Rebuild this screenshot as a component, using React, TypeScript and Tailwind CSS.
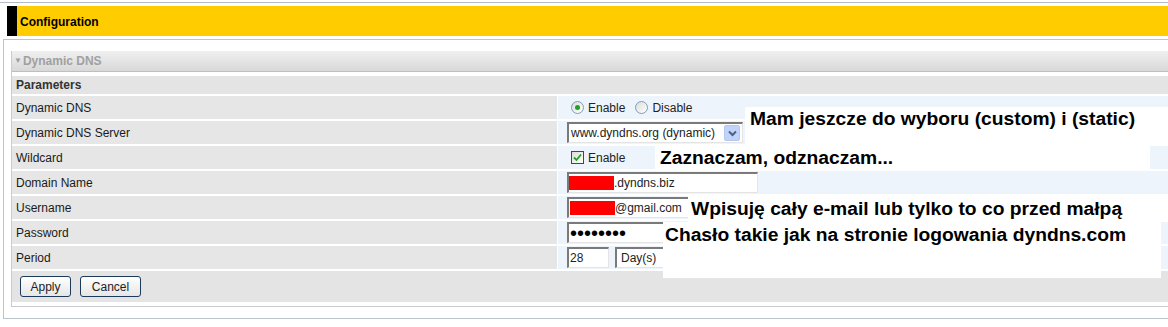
import React from "react";

const Radio = ({ checked }: { checked?: boolean }) => (
  <span className="relative inline-flex h-[13px] w-[13px] items-center justify-center rounded-full border border-[#7f9db9] bg-gradient-to-br from-[#dcdcd7] to-white">
    {checked && <span className="h-[5px] w-[5px] rounded-full bg-[#21a121]" />}
  </span>
);

const Checkbox = () => (
  <span className="inline-flex h-[13px] w-[13px] items-center justify-center border border-[#1c5180] bg-gradient-to-br from-[#dcdcd7] to-white">
    <svg width="9" height="9" viewBox="0 0 9 9">
      <path d="M1 4.5 L3.5 7 L8 1.5" stroke="#21a121" strokeWidth="1.8" fill="none" />
    </svg>
  </span>
);

const rowLabels = [
  "Dynamic DNS",
  "Dynamic DNS Server",
  "Wildcard",
  "Domain Name",
  "Username",
  "Password",
  "Period",
];

const inputCls =
  "h-[21px] bg-white border-t-2 border-l-2 border-t-[#7a7a7a] border-l-[#7a7a7a] border-b border-r border-b-[#e4e4e4] border-r-[#e4e4e4] flex items-center text-[12px] text-[#222]";

function RightCell({ i }: { i: number }) {
  switch (i) {
    case 0:
      return (
        <div className="flex items-center pl-[13px] gap-[4px] text-[12px] text-[#222]">
          <Radio checked />
          <span>Enable</span>
          <span className="ml-[2px]" />
          <Radio />
          <span>Disable</span>
        </div>
      );
    case 1:
      return (
        <div className="flex items-center pl-[9px] pt-[1px] self-start">
          <div className={`${inputCls} w-[176px] justify-between pl-[2px] pr-[2px]`}>
            <span>www.dyndns.org (dynamic)</span>
            <span className="flex h-[16px] w-[16px] items-center justify-center rounded-[2px] bg-[#c1d3fb] border border-[#b5c8f0]">
              <svg width="9" height="7" viewBox="0 0 9 7">
                <path d="M1 1.5 L4.5 5 L8 1.5" stroke="#4d6185" strokeWidth="2" fill="none" />
              </svg>
            </span>
          </div>
        </div>
      );
    case 2:
      return (
        <div className="flex items-center pl-[13px] gap-[4px] text-[12px] text-[#222]">
          <Checkbox />
          <span>Enable</span>
        </div>
      );
    case 3:
      return (
        <div className="flex items-center pl-[9px] pt-[1px] self-start">
          <div className={`${inputCls} w-[191px]`}>
            <span className="h-[14px] w-[45px] bg-[#ff0000]" />
            <span>.dyndns.biz</span>
          </div>
        </div>
      );
    case 4:
      return (
        <div className="flex items-center pl-[9px] pt-[1px] self-start">
          <div className={`${inputCls} w-[191px]`}>
            <span className="ml-px h-[14px] w-[45px] bg-[#ff0000]" />
            <span>@gmail.com</span>
          </div>
        </div>
      );
    case 5:
      return (
        <div className="flex items-center pl-[9px] pt-[1px] self-start">
          <div className={`${inputCls} w-[191px] pl-[1px] !text-[20px] leading-none text-black`}>
            <span>••••••••</span>
          </div>
        </div>
      );
    default:
      return (
        <div className="flex items-center pl-[9px] pt-[1px] self-start gap-[6px]">
          <div className={`${inputCls} w-[42px] pl-[1px]`}>
            <span>28</span>
          </div>
          <div className={`${inputCls} w-[80px] pl-[4px]`}>
            <span>Day(s)</span>
          </div>
        </div>
      );
  }
}

export default function App() {
  return (
    <div
      className="relative w-[1168px] h-[327px] overflow-hidden bg-white"
      style={{ fontFamily: '"Liberation Sans", Arial, sans-serif' }}
    >
      {/* top line */}
      <div className="mt-[2px] h-px bg-[#b4bcc8]" />
      {/* yellow bar */}
      <div className="ml-[7px] mt-[3px] flex h-[30px]">
        <div className="w-[10px] bg-black" />
        <div className="flex flex-1 items-center bg-[#ffcc00] pl-[3px] pt-[2px] text-[12px] font-bold text-black">
          Configuration
        </div>
      </div>
      {/* outer box */}
      <div className="ml-[3px] mt-[3px] h-[280px] border-l border-t border-b border-[#bcc4cc] pl-[7px] pt-[11px]">
        {/* inner panel */}
        <div className="h-[256px] border-l border-b border-[#c8ccd0]">
          <div className="flex h-[21px] items-center border-b border-[#b8c0cc] bg-gradient-to-b from-[#f0f0f0] to-[#d8d8d8] pl-[2px] text-[12px] font-bold text-[#a0a0a0]">
            <span className="text-[8px] mr-[1px]">▼</span>
            <span>Dynamic DNS</span>
          </div>
          <div className="mt-[4px] flex h-[18px] items-center bg-[#e4e4e4] pl-[4px] text-[12px] font-bold text-[#333]">
            Parameters
          </div>
          <div className="mt-[2px] flex flex-col gap-[2px]">
            {rowLabels.map((l, i) => (
              <div key={l} className="flex h-[23px] gap-px">
                <div className="flex w-[545px] items-center bg-[#e6e6e6] pl-[4px] text-[12px] text-[#1a1a1a]">
                  {l}
                </div>
                <div className="flex flex-1 bg-[#eef4fc]">
                  <RightCell i={i} />
                </div>
              </div>
            ))}
            <div className="flex h-[31px] items-center gap-[9px] bg-[#e4e4e4] pl-[8px]">
              <button className="h-[21px] w-[51px] rounded-[3px] border border-[#1c3a5a] bg-gradient-to-b from-white to-[#e6e6e6] text-[12px] text-[#222]">
                Apply
              </button>
              <button className="h-[21px] w-[61px] rounded-[3px] border border-[#1c3a5a] bg-gradient-to-b from-white to-[#e6e6e6] text-[12px] text-[#222]">
                Cancel
              </button>
            </div>
          </div>
        </div>
      </div>

      {/* pasted annotation boxes */}
      <div className="absolute left-[745px] top-[107px] h-[38px] w-[423px] bg-white pl-[5px] pt-[1px] text-[19.25px] leading-[22px] font-bold text-black">
        Mam jeszcze do wyboru (custom) i (static)
      </div>
      <div className="absolute left-[655px] top-[145px] flex h-[26px] w-[495px] items-center bg-white pl-[5px] text-[19.25px] leading-[22px] font-bold text-black">
        Zaznaczam, odznaczam...
      </div>
      <div className="absolute left-[688px] top-[196px] flex h-[26px] w-[480px] items-center bg-white pl-[3px] text-[19.25px] leading-[22px] font-bold text-black">
        Wpisuję cały e-mail lub tylko to co przed małpą
      </div>
      <div className="absolute left-[663px] top-[222px] h-[56px] w-[498px] bg-white pl-[2px] pt-[2px] text-[19.25px] leading-[22px] font-bold text-black">
        Chasło takie jak na stronie logowania dyndns.com
      </div>
    </div>
  );
}
